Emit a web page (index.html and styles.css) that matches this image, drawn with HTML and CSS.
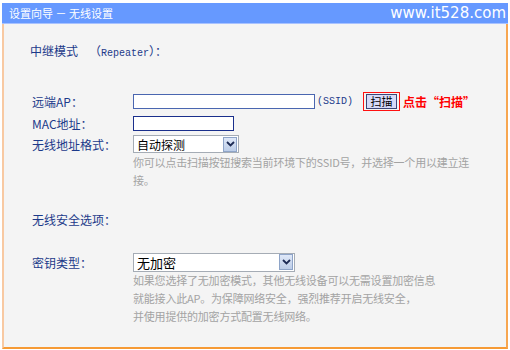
FILE: index.html
```html
<!DOCTYPE html>
<html lang="zh-CN">
<head>
<meta charset="utf-8">
<title>设置向导 － 无线设置</title>
<link rel="stylesheet" href="styles.css">
</head>
<body>
<div class="frame">
  <div class="head">
    <span class="title">设置向导 － 无线设置</span>
    <span class="site">www.it528.com</span>
  </div>
  <div class="panel">
    <div class="mode-row">
      <span class="mode-lbl">中继模式</span>
      <span class="mode-val">（<span class="mono">Repeater</span>）：</span>
    </div>

    <div class="form">
      <div class="lbl r1">远端AP：</div>
      <div class="field r1">
        <div class="input wide"></div>
        <span class="mono ssid">(SSID)</span>
        <div class="scan-mark"><button class="scan-btn" type="button">扫描</button></div>
        <span class="hint-red">点击“扫描”</span>
      </div>

      <div class="lbl r2">MAC地址：</div>
      <div class="field r2">
        <div class="input dark narrow"></div>
      </div>

      <div class="lbl r3">无线地址格式：</div>
      <div class="field r3">
        <div class="select sel-small">
          <span class="sel-text">自动探测</span>
          <span class="sel-btn"><svg width="9" height="6" viewBox="0 0 9 6"><polyline points="1,1 4.5,4.5 8,1" fill="none" stroke="#1d2b55" stroke-width="1.8"/></svg></span>
        </div>
      </div>

      <div class="spacer"></div>
      <div class="help help1">你可以点击扫描按钮搜索当前环境下的SSID号，并选择一个用以建立连<br>接。</div>

      <div class="lbl sec">无线安全选项：</div>
      <div class="sec-fill"></div>

      <div class="lbl r5">密钥类型：</div>
      <div class="field r5">
        <div class="select sel-big">
          <span class="sel-text">无加密</span>
          <span class="sel-btn"><svg width="9" height="6" viewBox="0 0 9 6"><polyline points="1,1 4.5,4.5 8,1" fill="none" stroke="#1d2b55" stroke-width="1.8"/></svg></span>
        </div>
      </div>

      <div class="spacer"></div>
      <div class="help help2">如果您选择了无加密模式，其他无线设备可以无需设置加密信息<br>就能接入此AP。为保障网络安全，强烈推荐开启无线安全，<br>并使用提供的加密方式配置无线网络。</div>
    </div>
  </div>
</div>
</body>
</html>
```

FILE: styles.css
```css
body {
  margin: 0;
  background: #ffffff;
  font-family: "Noto Sans CJK SC", "Noto Sans", sans-serif;
}

.frame {
  margin: 3px 0 0 2px;
  width: 506px;
}

.head {
  height: 20px;
  background: #6699ff;
  border-bottom: 1px solid #a8c2ff;
  display: flex;
  align-items: center;
  justify-content: space-between;
  padding: 0 2px 0 7px;
  color: #ffffff;
}

.title {
  font-size: 11px;
  line-height: 20px;
}

.site {
  font-family: "DejaVu Sans", sans-serif;
  font-size: 15px;
  line-height: 20px;
}

.panel {
  box-sizing: border-box;
  height: 325px;
  background: #f4f4f4;
  border-left: 2px solid #f8c9a2;
  border-right: 2px solid #f7a650;
  border-bottom: 2px solid #f69a35;
  padding: 18px 0 0 26px;
}

.mode-row {
  height: 18px;
  line-height: 18px;
  font-size: 12px;
  color: #1c3a8a;
  display: flex;
}

.mode-lbl {
  width: 59px;
}

.mono {
  font-family: "Liberation Mono", monospace;
  font-size: 10px;
}

.form {
  display: grid;
  grid-template-columns: 103px 1fr;
  margin-top: 30px;
}

.lbl {
  font-size: 12px;
  color: #1c3a8a;
  display: flex;
  align-items: center;
  padding-left: 2px;
}

.field {
  display: flex;
  align-items: center;
}

.r1 { height: 22px; }
.r2 { height: 22px; }
.r3 { height: 20px; }

.input {
  box-sizing: border-box;
  height: 15px;
  background: #ffffff;
  border: 1px solid #4a66b0;
}

.input.wide { width: 182px; }
.input.narrow { width: 101px; }
.input.dark { border-color: #1a2f8c; }

.ssid {
  color: #1c3a8a;
  margin-left: 2px;
}

.scan-mark {
  margin-left: 10px;
  box-sizing: border-box;
  width: 37px;
  height: 19px;
  border: 1px solid #ff1010;
  display: flex;
  align-items: center;
  justify-content: center;
}

.scan-btn {
  box-sizing: border-box;
  width: 31px;
  height: 15px;
  padding: 0;
  background: #d6daf8;
  border: 1px solid #3c4676;
  font-family: "Noto Sans CJK SC", sans-serif;
  font-size: 11px;
  line-height: 12px;
  color: #000000;
}

.hint-red {
  margin-left: 3px;
  color: #ff0000;
  font-size: 12px;
  font-weight: bold;
}

.select {
  box-sizing: border-box;
  background: #ffffff;
  border: 1px solid #a5acb5;
  display: flex;
  align-items: center;
  justify-content: space-between;
  padding: 0 1px 0 3px;
}

.sel-small { width: 106px; height: 18px; }
.sel-big { width: 162px; height: 19px; }

.sel-text {
  font-size: 12px;
  color: #000000;
}

.sel-big .sel-text { font-size: 13px; }

.sel-btn {
  box-sizing: border-box;
  width: 14px;
  height: 15px;
  background: linear-gradient(#dfe8f8, #bccde8);
  border: 1px solid #8ea4c8;
  display: flex;
  align-items: center;
  justify-content: center;
}

.sel-big .sel-btn { height: 16px; }

.help {
  font-size: 11px;
  line-height: 18px;
  letter-spacing: -0.2px;
  color: #a3a3a3;
}

.help1 { margin-top: -1px; }

.sec {
  height: 18px;
  margin-top: 21px;
}

.r5 {
  height: 22px;
  margin-top: 23px;
}

.help2 { margin-top: -2px; }
```
